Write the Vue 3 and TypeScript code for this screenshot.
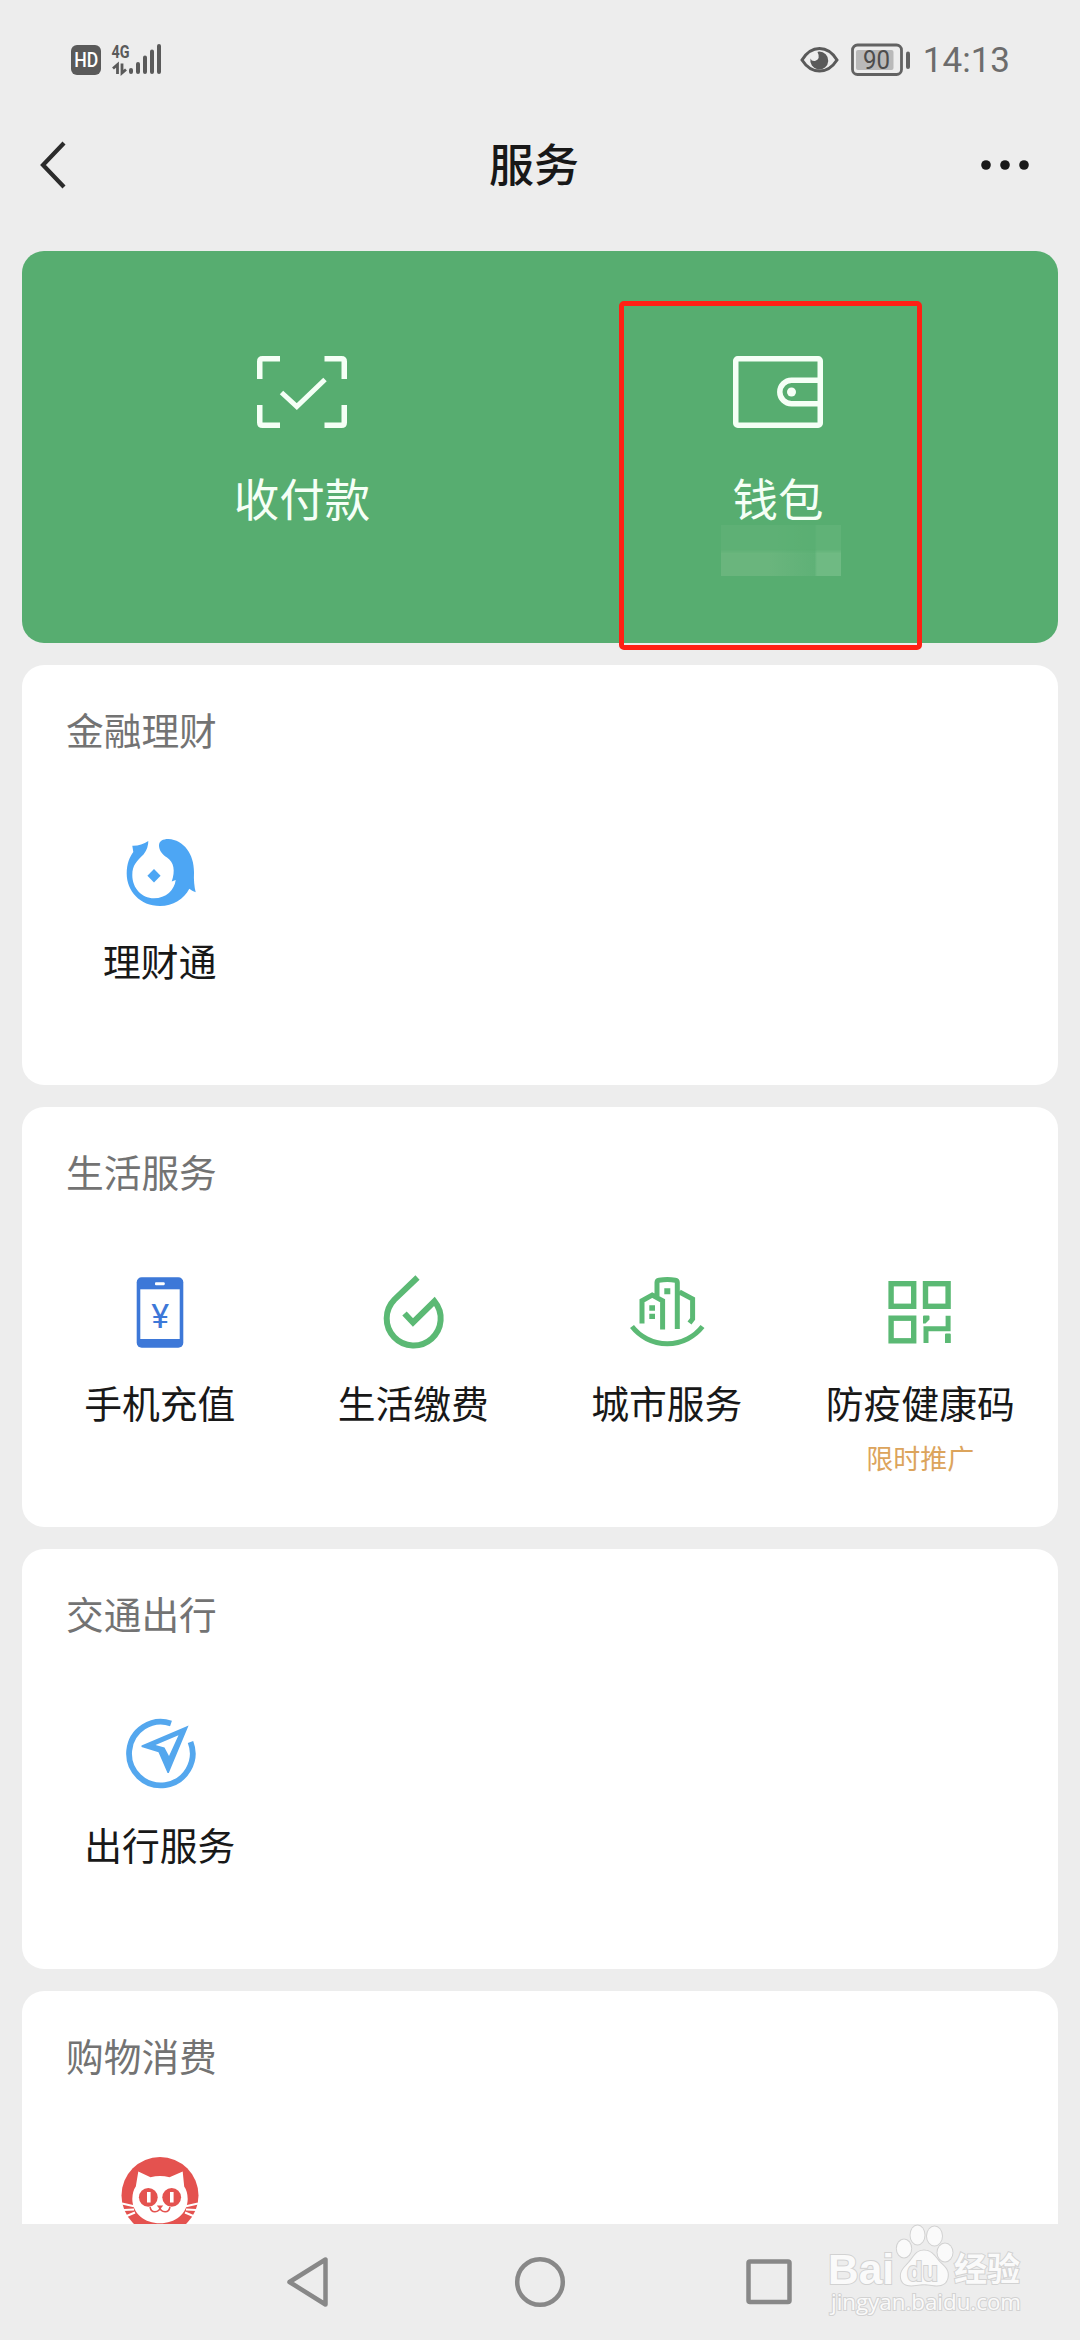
<script setup lang="ts">
interface Service {
  icon: string
  label: string
  note?: string
}
interface Section {
  title: string
  items: Service[]
}

const sections: Section[] = [
  { title: '金融理财', items: [{ icon: 'licai', label: '理财通' }] },
  {
    title: '生活服务',
    items: [
      { icon: 'phone', label: '手机充值' },
      { icon: 'drop', label: '生活缴费' },
      { icon: 'city', label: '城市服务' },
      { icon: 'qr', label: '防疫健康码', note: '限时推广' },
    ],
  },
  { title: '交通出行', items: [{ icon: 'compass', label: '出行服务' }] },
  { title: '购物消费', items: [{ icon: 'cat', label: '' }] },
]
</script>

<template>
  <div class="screen">
    <header class="status">
      <svg width="92" height="46" viewBox="0 -6 92 46">
        <rect x="0" y="2" width="30" height="30" rx="6" fill="#5a5a5a" />
        <text x="15.300" y="24.200" text-anchor="middle" font-size="20" font-weight="500" fill="#fff" textLength="24" lengthAdjust="spacingAndGlyphs">HD</text>
        <text x="40.500" y="14.600" font-size="19" font-weight="700" fill="#5a5a5a" textLength="18" lengthAdjust="spacingAndGlyphs">4G</text>
        <path d="M46.500 31V21.500L42 25.500M51 20.500V30L55 26.500" fill="none" stroke="#5a5a5a" stroke-width="2.800" />
        <path d="M60 27V29M67 21V29M74 14.500V29M81 8.500V29M88 3V29" stroke="#5a5a5a" stroke-width="4" stroke-linecap="round" />
      </svg>
      <div class="status-right">
        <svg class="eye" width="39" height="28" viewBox="0 0 39 28">
          <path d="M2 14Q9 2.500 19.500 2.500T37 14Q30 25 19.500 25T2 14Z" fill="none" stroke="#5a5a5a" stroke-width="3" />
          <path d="M19 5.500A9 9 0 1 1 10.500 12.500Q11.500 15.500 15 15Q21 13 17.500 6Z" fill="#5a5a5a" />
        </svg>
        <svg class="battery" width="60" height="34" viewBox="0 0 60 34">
          <rect x="1.500" y="2" width="49" height="29.500" rx="5" fill="none" stroke="#626262" stroke-width="2.800" />
          <rect x="5" y="7" width="37.500" height="20" rx="2" fill="#b9b9b9" />
          <rect x="55" y="8.500" width="4" height="17.500" rx="2" fill="#626262" />
          <text x="25.500" y="25.500" text-anchor="middle" font-size="26" fill="#4c4c4c" textLength="27" lengthAdjust="spacingAndGlyphs">90</text>
        </svg>
        <span class="time">14:13</span>
      </div>
    </header>

    <nav class="titlebar">
      <svg width="30" height="50" viewBox="0 0 30 50">
        <path d="M25 3L4 25L25 47" fill="none" stroke="#2b2b2b" stroke-width="4.200" />
      </svg>
      <h1>服务</h1>
      <svg width="50" height="12" viewBox="0 0 50 12" fill="#181818">
        <circle cx="6" cy="6" r="4.800" /><circle cx="25" cy="6" r="4.800" /><circle cx="44" cy="6" r="4.800" />
      </svg>
    </nav>

    <main>
      <section class="hero">
        <div class="hero-item">
          <svg width="90" height="72" viewBox="0 0 90 72" fill="none" stroke="#f5fff6" stroke-width="5.500">
            <path d="M2.750 23V5.500Q2.750 2.750 5.500 2.750H23M67.500 2.750H84.500Q87.250 2.750 87.250 5.500V23M87.250 49V66.500Q87.250 69.250 84.500 69.250H67.500M23 69.250H5.500Q2.750 69.250 2.750 66.500V49" />
            <path d="M24.500 36.500L39.800 50.500L68 23.500" stroke-width="5" />
          </svg>
          <span>收付款</span>
        </div>
        <div class="hero-item">
          <svg width="90" height="72" viewBox="0 0 90 72" fill="none" stroke="#f5fff6" stroke-width="5.500">
            <rect x="2.750" y="2.750" width="84.500" height="66.500" rx="2" />
            <path d="M87 24.300H58.500A11.700 11.700 0 0 0 58.500 47.700H87" />
            <circle cx="58.500" cy="36" r="4.500" fill="#f5fff6" stroke="none" />
          </svg>
          <span>钱包</span>
          <i class="masked"></i>
          <i class="highlight"></i>
        </div>
      </section>

      <section v-for="s in sections" :key="s.title" class="card">
        <h2>{{ s.title }}</h2>
        <div class="grid">
          <div v-for="it in s.items" :key="it.icon" class="cell">
            <svg width="84" height="84" viewBox="0 0 84 84" fill="none">
              <g v-if="it.icon === 'licai'" fill="#4da6f4">
                <path d="M14.300 15.700Q23 16 30.300 11Q30.500 18 25.500 24.500C19 31 14.300 35 14.300 45C14.300 58 23.500 68.300 36 68.300C48 68.300 56.500 60 57.700 50L53.700 51.500C57.500 41 56 32 49 27.500C43.500 24 41 19.500 41 15.500C41 11 45 9 50.300 9C66 10 76 24 76 42Q75.500 54 77.700 62.300Q74 61 71.300 58.800C66 69 55 76 42 76C22 76 8.700 61 8.700 43.500C8.700 34 11.500 27 15.300 22Z" />
                <path d="M36 39L42.600 45.700L36 52.400L29.400 45.700Z" />
              </g>
              <g v-else-if="it.icon === 'phone'">
                <rect x="18.700" y="5.300" width="46.600" height="70.400" rx="5" fill="#3d78d8" />
                <rect x="22.300" y="17.300" width="39.400" height="49.700" fill="#fff" />
                <rect x="37" y="10.300" width="9.700" height="3" rx="1" fill="#fff" />
                <text x="42.300" y="55.700" text-anchor="middle" font-size="34" fill="#3d78d8">¥</text>
              </g>
              <path v-else-if="it.icon === 'drop'" d="M46.500 5.500L23.400 27.600A27 27 0 1 0 63.500 29.300L42 50.500L33.500 41.500" stroke="#5bb974" stroke-width="6" />
              <g v-else-if="it.icon === 'city'" stroke="#5bb974" stroke-width="5">
                <path d="M7 54.500A44.700 44.700 0 0 0 77.500 54.500M17 51.500V28.700L27.200 23L37.600 28.700V57.500M32 24V10.500Q32 8.500 34 8.200Q42.500 7 50.300 8.200Q52.300 8.500 52.300 10.500V57M54.500 20L67.600 27V47L64.500 51" />
                <path d="M24.300 33.300h5.700v5.400h-5.700zM24.300 41.700h5.700v5.400h-5.700zM39.300 16.300h6v6h-6z" fill="#5bb974" stroke="none" />
              </g>
              <g v-else-if="it.icon === 'qr'" stroke="#5bb974" stroke-width="5.400">
                <rect x="13.100" y="11.700" width="22.600" height="22.600" />
                <rect x="47.500" y="11.700" width="22.600" height="22.600" />
                <rect x="13.100" y="46.200" width="22.600" height="22.600" />
                <path d="M48 71V56.700H70.100V43.700" stroke-width="5" />
                <path d="M45 44.500q0-1 1-1h4.500q1 0 1 1v3l-4 4H45zM67 62.500q0-1 1-1h3.800q1 0 1 1V71H67z" fill="#5bb974" stroke="none" />
              </g>
              <g v-else-if="it.icon === 'compass'">
                <path d="M53 9.400A31.800 31.800 0 1 0 72.500 28" stroke="#54a7ee" stroke-width="5.800" />
                <path fill-rule="evenodd" d="M70.600 11.500L23.500 31.500V33L40.500 38.300L49.500 59H50.800ZM60.500 21.200L37.500 31L46.500 33.500L51 42Z" fill="#54a7ee" />
              </g>
              <g v-else>
                <circle cx="42" cy="39.500" r="38.500" fill="#e4524f" />
                <path d="M20.300 15.500L32.500 21.200Q42 19 51.500 21.200L64.700 15.500L66.200 30.500Q69.500 35 69.700 43C69.500 58 57 67.300 42 67.300S14.500 58 14.300 43Q14.500 35 17.800 30.500Z" fill="#fff" />
                <circle cx="30.300" cy="41.300" r="9.400" fill="#e4524f" /><circle cx="53.700" cy="41.300" r="9.400" fill="#e4524f" />
                <path d="M30.800 36V46.500M53.800 36V46.500" stroke="#fff" stroke-width="3.600" />
                <path d="M38.800 49.500H45.200L42 53.500Z" fill="#e4524f" />
                <path d="M32 51Q33 56 37 55.800Q41.500 55.500 42 51.500Q42.500 55.500 47 55.800Q51 56 52 51" stroke="#e4524f" stroke-width="1.500" />
                <path d="M4 47.500L16 50.300M5.500 54L16 53.500M7.500 60.500L17 56.500M80 47.500L68 50.300M78.500 54L68 53.500M76.500 60.500L67 56.500" stroke="#fff" stroke-width="2" />
              </g>
            </svg>
            <span class="label">{{ it.label }}</span>
            <span v-if="it.note" class="note">{{ it.note }}</span>
          </div>
        </div>
      </section>
    </main>

    <footer class="navbar">
      <svg width="44" height="54" viewBox="0 0 44 54"><path d="M3.500 27L39.500 4.500V49.500Z" /></svg>
      <svg width="54" height="54" viewBox="0 0 54 54"><circle cx="27" cy="27" r="22.800" /></svg>
      <svg width="48" height="54" viewBox="0 0 48 54"><rect x="3.500" y="6.500" width="41" height="40.500" rx="1.500" /></svg>
    </footer>

    <svg class="watermark" width="210" height="110" viewBox="0 0 210 110">
      <g class="wm">
        <text x="16" y="69" class="wm-latin" font-size="43" textLength="66" lengthAdjust="spacingAndGlyphs">Bai</text>
        <ellipse cx="92" cy="33.500" rx="7.200" ry="9" />
        <ellipse cx="105.500" cy="20" rx="7" ry="9.500" />
        <ellipse cx="122.500" cy="21" rx="7.500" ry="9.500" />
        <ellipse cx="133" cy="37.500" rx="7.500" ry="9" />
        <path d="M112 35.500C120 35.500 123 42 128 47.500C134 53 137 56 135.500 63C134 69.500 128 71.500 120 70C114 69 110 69 104 70C96 71.500 90 69.500 89 63C88 56 92 53 97 47.500C102 42 104 35.500 112 35.500Z" />
        <text x="95" y="66" class="wm-du" font-size="27" textLength="31" lengthAdjust="spacingAndGlyphs">du</text>
        <text x="142" y="66" class="wm-cjk" font-size="33" textLength="66" lengthAdjust="spacingAndGlyphs">经验</text>
        <text x="19" y="95" class="wm-url" font-size="21" textLength="190" lengthAdjust="spacingAndGlyphs">jingyan.baidu.com</text>
      </g>
    </svg>
  </div>
</template>

<style>
body {
  background: #ededed;
}
</style>

<style scoped>
.screen {
  position: relative;
  width: 1080px;
  height: 2340px;
  display: flex;
  flex-direction: column;
  overflow: hidden;
  background: #ededed;
  font-family: Roboto, "Noto Sans CJK SC", sans-serif;
}
svg {
  display: block;
  flex: none;
  overflow: visible;
}
.status {
  flex: none;
  height: 120px;
  box-sizing: border-box;
  padding: 0 70px 0 71px;
  display: flex;
  align-items: center;
  justify-content: space-between;
}
.status-right {
  display: flex;
  align-items: center;
}
.eye {
  margin-right: 12px;
}
.battery {
  margin-right: 12px;
}
.time {
  padding-top: 2px;
  font-size: 35px;
  line-height: 36px;
  color: #6c6c6c;
}
.titlebar {
  flex: none;
  height: 131px;
  box-sizing: border-box;
  padding: 0 50px 42px 39px;
  display: flex;
  align-items: center;
}
h1,
h2 {
  margin: 0;
}
h1 {
  margin: 4px auto 0 420px;
  font-size: 45px;
  line-height: 60px;
  font-weight: 500;
  color: #181818;
}
main {
  flex: none;
  height: 1973px;
  box-sizing: border-box;
  padding: 0 22px;
  display: flex;
  flex-direction: column;
  gap: 22px;
  overflow: hidden;
}
.hero {
  flex: none;
  height: 392px;
  box-sizing: border-box;
  padding: 105px 42px 0;
  display: flex;
  border-radius: 22px;
  background: #57ad70;
}
.hero-item {
  position: relative;
  flex: 1;
  display: flex;
  flex-direction: column;
  align-items: center;
  color: #f5fff6;
  font-size: 45.5px;
  line-height: 60px;
}
.hero-item span {
  margin-top: 44px;
}
.masked {
  margin-top: -7px;
  margin-left: 6px;
  width: 120px;
  height: 51px;
  background: linear-gradient(90deg, #6ab57d 0 40%, #5fb177 78%, #6fba83 80%);
  -webkit-mask-image: linear-gradient(#0006 0 48%, #000 56%);
  mask-image: linear-gradient(#0006 0 48%, #000 56%);
}
.highlight {
  position: absolute;
  left: 79px;
  top: -55px;
  width: 303px;
  height: 349px;
  box-sizing: border-box;
  border: 5px solid #ff2014;
  border-radius: 5px;
}
.card {
  flex: none;
  height: 420px;
  box-sizing: border-box;
  padding: 37px 11px 0;
  border-radius: 22px;
  background: #fff;
}
h2 {
  padding-left: 33px;
  font-size: 37.700px;
  line-height: 60px;
  font-weight: 400;
  color: #737373;
}
.grid {
  margin-top: 68px;
  display: grid;
  grid-template-columns: repeat(4, 1fr);
}
.cell {
  display: flex;
  flex-direction: column;
  align-items: center;
  white-space: nowrap;
}
.label {
  margin-top: 19px;
  font-size: 37.800px;
  line-height: 60px;
  color: #181818;
}
.note {
  margin-top: 5px;
  font-size: 27px;
  line-height: 40px;
  color: #dca45c;
}
.navbar {
  flex: none;
  height: 116px;
  box-sizing: border-box;
  padding: 0 285px 0 286px;
  display: grid;
  grid-template-columns: 227px 232px auto;
  align-items: center;
  fill: none;
  stroke: #888;
  stroke-width: 4.5px;
  stroke-linejoin: round;
}
.watermark {
  position: absolute;
  left: 812px;
  top: 2215px;
}
.wm {
  fill: #fafafa;
  stroke: #d2d2d2;
  stroke-width: 2px;
  paint-order: stroke;
}
.wm-latin,
.wm-du {
  font-family: "Liberation Sans", sans-serif;
  font-weight: 700;
}
.wm-du {
  fill: #ededed;
}
.wm-cjk {
  font-family: "Noto Sans CJK SC", sans-serif;
  font-weight: 700;
}
.wm-url {
  font-family: "Open Sans", sans-serif;
}
</style>
